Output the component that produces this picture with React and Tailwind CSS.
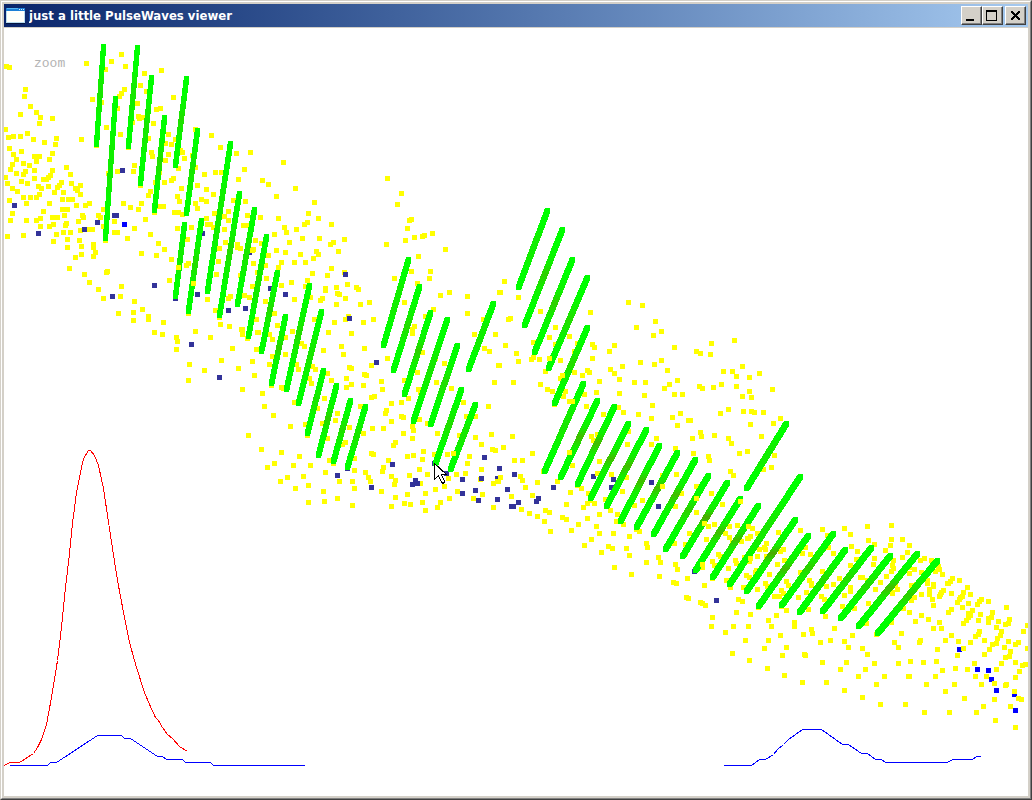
import React from "react";

const YELLOW = `
6,66 9,67 25,89 24,96 30,106 20,114 36,112 40,117 52,118 39,123 5,129 27,133 8,137 13,136 20,136 33,139 44,142 56,138 55,144 9,148 21,151 13,154 52,153 34,156 39,156 16,159 49,159 36,161 12,164 23,163 29,165 10,169 25,171 34,170 52,170 66,167 16,173 23,174 5,177 50,175 48,177 70,174 34,178 43,179 46,179 21,181 7,183 27,183 61,182 38,186 48,186 57,187 59,185 71,183 80,185 12,188 41,188 75,188 77,190 17,191 54,192 63,192 39,194 80,194 23,197 30,197 36,197 9,200 62,199 68,199 72,199
86,63 111,61 121,54 105,69 125,66 144,73 161,70 140,85 146,91 124,89 121,93 119,96 92,99 101,102 173,97 137,103 117,108 156,109 160,108 138,116 143,117 139,118 153,123 106,127 132,122 120,134 195,129 168,134 148,138 81,139 211,135 171,144 175,139 165,143 220,147 236,153 250,152 151,152 152,156 168,154 180,150 182,152 192,155 184,158 165,160 134,165 133,171 117,171 108,173 195,167 178,168 159,172 204,174 215,172 221,172 244,169 238,179 173,178 171,180 164,182 155,182 197,185 181,188 206,189 150,191 148,195 213,194 177,196 201,199 206,201 96,145 128,147 140,185
26,203 49,203 76,205 85,205 89,203 62,209 67,209 43,211 12,213 10,220 26,220 36,220 40,218 52,217 57,217 64,215 82,215 83,217 78,221 98,215 100,217 103,209 40,226 49,226 53,224 66,223 65,225 56,234 63,232 70,232 7,236 23,235 80,230 88,229 92,229 103,226 53,241 67,239 79,240 67,247 81,246 93,244 93,247 95,252 93,256 81,254 75,257 69,268 84,274 106,272 107,271 89,282 98,289 103,298 121,286 120,296 134,301 118,313 133,312 133,320 142,309 148,316 148,319 163,322 154,332 162,334 176,337 177,341 176,349 189,364 204,370 188,380 195,331 210,337 232,348 221,360 238,368 252,361 254,375 256,349 257,332 220,324 229,326 241,329 242,334
123,203 130,207 141,203 138,209 114,221 114,232 117,232 134,228 145,219 127,238 150,234 158,243 164,249 141,253 156,255 171,259 169,280 159,206 163,206 179,201 174,212 178,212 182,214 177,228 195,203 197,208 206,218 187,239 191,227 186,265 188,263 207,224 210,224 213,227 214,213 224,216 228,211 228,220 224,229 233,200 245,201 243,225 246,225 255,240 225,242 237,244 237,247 240,248 219,248 218,261 216,274 207,299 215,310 228,298 230,296 240,275 244,295 249,297 252,286 256,319 247,338 252,250 253,263 257,272 105,240 154,212 219,317 188,313
283,162 262,180 268,184 276,196 295,188 247,215 260,217 278,218 314,202 308,213 307,222 304,224 318,218 331,224 284,227 286,232 296,229 274,234 261,243 289,242 302,238 319,238 344,239 333,242 330,244 338,251 316,251 318,254 313,258 276,250 268,255 285,252 300,254 294,262 305,262 281,262 278,267 265,265 253,249 266,278 281,285 291,282 312,273 331,268 327,275 307,280 305,286 344,272 347,284 356,287 358,289 336,287 337,293 339,294 325,288 325,290 345,298 336,304 322,298 320,300 310,297 360,304 369,302 294,299 274,313 265,301 252,286 314,319 348,316 345,319 373,319
387,178 401,193 397,204 411,219 409,220 407,228 414,237 422,236 424,235 432,233 405,240 386,244 445,249 418,256 411,271 430,271 429,278 394,278 417,283 404,302 440,295 449,292 467,296 467,313 433,309 425,316 483,319 499,292
242,329 242,334 277,325 269,334 272,339 258,332 242,389 262,393 264,406 273,415 290,426 248,435 261,449 281,452 274,463 267,467 280,481 287,477 299,456 293,465 310,465 303,476 295,488 308,485 325,472 323,491 308,502 324,501 337,498 352,505 339,481 352,481 354,488 354,470 365,472 368,477 370,481 381,491 272,356 269,364 292,331 285,337 285,354 304,346 301,343 296,364 298,369 294,402 305,424 281,387 283,388 328,332 334,322 323,350 341,346 343,354 351,333 364,348 363,322 349,367 351,368 312,366 315,369 309,378 311,383 327,373 331,380 346,378 351,384 346,387 337,413 335,420 324,398 317,408 322,423 327,438 349,427 360,406 363,433 372,428 383,428 371,365 363,385 364,374 366,375 381,381 382,389 374,396 371,397 386,410 385,413 391,403 401,402 408,398 401,416 403,417 391,421 403,433 412,438 395,442 393,445 412,426 413,430 437,433 345,442 342,444 354,458 329,460 371,453 373,454 388,460 383,467 382,471 391,476 395,480 394,484 407,456 413,455 422,459 423,451 434,454 409,475 419,469 427,474 420,483 407,494 395,497 404,503 410,504 391,506 422,502 425,510 437,507 440,502 425,493 435,489 444,486 448,478 449,498 457,491 456,474 465,473 467,463 469,456 447,454 459,435 475,437 481,444 491,434 492,449 495,450 488,406 494,382 475,416 466,416 463,402 451,388 436,382 444,363 435,358 418,389 420,392 417,372 422,352 414,326 412,333 412,329 387,358 404,380 474,334 484,348 489,351 495,334 482,494 473,498 493,483 497,481 493,507 480,479 427,423 419,419 498,365 271,385 307,435 333,463
504,281 500,292 518,297 540,311 510,318 508,319 505,345 516,353 518,361 499,365 513,382 531,359 539,359 533,342 533,357 540,384 555,327 549,337 569,336 590,312 555,344 560,360 545,371 560,378 574,372 582,375 587,370 589,372 592,344 594,347 592,358 599,381 610,369 614,373 619,379 622,366 609,351 614,345 628,302 642,305 636,327 655,321 661,331 653,335 674,347 640,362 654,364 661,360 667,370 634,382 645,382 669,384 677,380 664,388 696,351 700,353 711,343 710,354 734,340 742,366 732,371 723,371 736,376 749,377 759,373 721,384 736,386 713,387 699,386 702,388 547,389 574,351 577,343 772,389
552,391 565,391 563,396 584,394 596,392 586,406 603,414 623,412 619,393 618,407 638,414 644,395 652,405 651,418 674,394 682,394 680,413 672,417 677,425 688,420 690,420 720,413 728,409 742,396 749,391 751,397 743,411 751,411 754,412 750,424 700,432 701,436 692,438 714,435 728,438 731,443 747,451 739,453 693,453 708,456 709,460 730,471 733,475 696,486 711,493 696,512 722,504 656,438 651,444 627,444 628,431 675,448 591,436 597,434 593,440 572,465 599,461 597,473 611,474 626,477 662,475 676,474 622,491 642,500 634,505 594,503 587,503 588,493 581,488 583,507 570,492 566,504 587,518 599,514 610,510 617,514 623,524 629,536 639,531 613,533 599,533 596,526 578,524 571,530 591,539 584,545 601,552 608,546 612,548 626,548 629,555 614,567 631,574 646,543 647,547 646,562 658,557 660,562 659,576 675,564 677,569 673,582 676,583 687,578 704,585 686,597 562,517 566,519 557,481 537,482 525,487 532,495 545,510 549,512 544,521 550,531 537,516 529,513 521,509 511,496 520,476 522,480 500,477 498,481 514,460 522,460 532,453 512,436 503,447 491,434 481,469 605,499 675,506 681,493 689,533 674,543 685,544 685,553 706,539 708,526 714,524 729,526 724,524 737,525 752,528 725,533 729,537 732,542 741,541 748,538 750,536 718,554 720,556 730,550 732,547 712,561 714,565 728,568 735,560 736,563 726,580 746,575 755,572 743,587 757,589 749,577 554,404 543,471 577,485 590,500 616,521 636,529 712,578 730,587
763,412 780,418 773,423 761,436 774,455 771,467 763,469 844,528 867,526 891,525 891,539 902,539 850,534 868,540 874,544 890,545 909,545 885,550 907,552 902,557 874,558 873,564 893,560 892,565 857,551 851,546 856,559 850,565 833,553 822,529 827,535 828,547 800,530 778,532 757,533 748,526 747,538 741,541 766,543 764,547 759,549 765,549 783,549 780,551 766,556 757,556 744,557 749,561 777,564 784,560 769,574 756,570 765,583 767,586 786,581 788,585 781,590 783,593 774,596 779,596 805,547 810,554 802,553 800,572 809,580 811,585 806,592 798,597 826,586 822,571 821,596 833,584 839,578 844,595 850,588 850,591 862,577 867,580 880,582 886,576 891,571 909,573 914,569 909,567 920,560 924,558 931,560 921,572 927,580 927,583 929,591 933,586 935,571 938,566 942,574 939,569 950,581 952,578 948,583 959,580 967,587 970,594 963,592 960,597 951,593 943,590 940,594 939,596 981,599 911,585 915,588 916,584 897,589 892,592 911,597
702,564 702,567 688,598 700,602 702,603 705,605 712,617 711,626 725,632 733,626 736,612 738,599 742,601 750,614 748,626 745,640 732,653 749,660 767,668 764,648 768,640 771,626 768,620 776,615 786,610 780,635 786,647 782,655 784,675 802,682 826,682 804,654 805,655 803,634 811,629 812,633 794,622 794,626 820,642 830,640 834,628 822,662 846,662 840,669 844,690 862,697 880,704 905,704 924,712 949,712 976,712 995,720 1015,727 858,676 865,669 874,663 867,654 862,648 848,647 844,641 852,635 876,684 884,676 898,663 910,661 898,647 894,642 901,633 891,622 908,676 909,676 923,662 936,661 937,649 919,642 920,640 926,684 935,676 942,670 945,691 954,684 964,698 955,668 967,669 974,663 975,676 981,684 986,676 994,683 994,699 983,706 1010,706 1014,691 1018,698 1021,699 1006,684 1005,685 1015,677 1019,671 1022,665 1025,664 1015,662 996,669 1001,663 1005,657 1009,656 1010,651 1004,647 1015,644 1018,642 1008,641 1027,648 1023,631 1027,625 984,654 989,649 992,644 996,643 997,638 1000,635 1001,631 996,627 998,621 1005,624 1009,619 1008,623 1006,607 992,612 988,618 988,622 991,617 988,601 979,601 977,604 980,614 978,620 972,610 968,613 970,615 968,617 966,620 963,623 962,607 957,602 959,599 962,596 968,603 979,631 978,634 975,636 970,642 984,640 958,641 963,648 957,655 945,640 951,635 941,628 933,628 939,622 928,619 921,615 915,621 909,612 903,608 911,600 921,594 929,594 939,596 941,592 932,599 933,605 951,609 948,612 933,584 929,589 947,583 866,623 868,603 842,606 854,608 825,616 808,609 824,599 850,587 875,589 860,577 873,564 893,568 811,583 895,584 897,589 892,593 914,597 758,607 781,606 876,634 840,618
`;

/* Returns that lie in front of the pulse segments. */
const FRONT = `178,267 193,283 453,453 549,358 562,375 569,401 572,401 569,452 662,486 696,498 740,501 704,523 748,526 702,564 750,558`;

/* Navy returns that the yellow ones overlap in part. */
const NAVY = `249,252 497,478 593,476 202,233 175,298 285,294 270,288 434,463 347,468 694,571 499,468`;

/* Navy returns that stay in full view. */
const NAVY_FRONT = `122,170 14,205 38,233 84,229 97,222 114,215 116,215 154,285 112,296 197,294 228,310 245,308 191,344 219,377 345,274 349,318 376,362 337,475 392,464 371,487 415,480 412,484 417,483 446,473 462,479 481,478 484,457 462,493 475,490 478,500 497,499 514,474 507,489 553,487 538,498 536,501 518,502 511,506 513,506 613,479 611,487 651,482 658,506 716,600`;

const BLUE = `124,224 959,649 977,669 988,670 991,679 996,690 1014,694 1015,710`;

/* Pulse segments: top x, top y, bottom x, bottom y, strength class (0-5). */
const PULSES = [
  [103, 46, 96, 144, 1], [115, 98, 105, 238, 0], [137, 47, 128, 146, 1], [151, 77, 140, 183, 1],
  [164, 117, 154, 210, 2], [186, 78, 175, 165, 2], [197, 130, 186, 213, 1], [230, 143, 207, 291, 0],
  [239, 193, 219, 315, 2], [254, 209, 237, 304, 1], [184, 224, 175, 296, 0], [201, 220, 188, 311, 2],
  [266, 236, 248, 336, 1], [277, 272, 261, 351, 2], [285, 316, 271, 383, 3], [309, 285, 286, 389, 2],
  [321, 311, 298, 403, 1], [323, 370, 307, 433, 1], [336, 385, 318, 455, 3], [350, 400, 333, 461, 2],
  [365, 406, 347, 467, 1], [408, 259, 383, 345, 0], [419, 286, 393, 370, 2], [430, 312, 404, 394, 3],
  [447, 319, 413, 421, 1], [457, 345, 430, 424, 2], [461, 389, 435, 463, 2], [475, 404, 450, 469, 1],
  [493, 303, 468, 369, 0], [547, 210, 518, 287, 0], [562, 229, 524, 325, 3], [572, 259, 534, 352, 3],
  [587, 277, 548, 368, 2], [587, 327, 554, 403, 2], [583, 383, 544, 471, 1], [597, 400, 560, 477, 4],
  [614, 406, 577, 484, 4], [628, 423, 590, 498, 4], [646, 429, 606, 506, 4], [659, 445, 620, 521, 4],
  [677, 452, 636, 527, 4], [695, 459, 653, 534, 4], [708, 475, 665, 549, 3], [727, 482, 682, 556, 5],
  [740, 498, 695, 570, 4], [758, 505, 712, 577, 4], [786, 423, 746, 488, 0], [800, 476, 729, 584, 1],
  [795, 519, 746, 591, 5], [808, 535, 758, 606, 4], [833, 533, 781, 605, 3], [845, 549, 799, 612, 2],
  [871, 547, 822, 611, 2], [890, 555, 840, 618, 2], [917, 553, 858, 626, 4], [937, 560, 877, 633, 3],
];

const PEAKS = ["#0fef00", "#18e600", "#24dc00", "#2ecf00", "#42bc00", "#4ca800"];

const OUTGOING =
  "4,765 9,762 19,762 33,753 37,747 41,739 46,724 51,697 57,660 61,627 65,587 69,553 72,523 76,492 80,472 83,458 88,450 90,450 94,455 98,465 103,488 107,515 112,548 117,580 123,612 129,642 136,667 144,692 149,704 155,717 158,720 162,727 167,734 172,738 179,746 187,751";
const RETURN_A =
  "9,765 47,765 50,762 56,762 97,735 121,735 124,738 130,738 157,756 162,756 166,759 182,759 185,762 210,762 213,765 304,765";
const RETURN_B =
  "723,765 751,765 759,759 765,759 773,754 777,749 783,744 788,739 802,729 821,729 842,744 848,744 861,753 867,753 875,759 881,759 885,762 947,762 952,759 972,759 976,756 980,756";

function dots(list) {
  return list
    .trim()
    .split(/\s+/)
    .map((pair) => {
      const [x, y] = pair.split(",").map(Number);
      return `M${x - 2} ${y - 2}h5v5h-5z`;
    })
    .join("");
}

function sweep([x1, y1, x2, y2]) {
  return `M${x1 - 2} ${y1 - 2}H${x1 + 3}V${y1 + 3}L${x2 + 3} ${y2 + 3}H${x2 - 2}V${y2 - 2}Z`;
}

function Scene() {
  return (
    <svg
      className="block h-full w-full"
      viewBox="4 28 1024 768"
      preserveAspectRatio="xMinYMin meet"
      shapeRendering="crispEdges"
      role="img"
      aria-label="Pulse point cloud"
    >
      <defs>
        {PEAKS.map((color, i) => (
          <linearGradient key={color} id={`pulse${i}`} x1="0" y1="0" x2="0" y2="1">
            <stop offset="0.2" stopColor="#00ff00" />
            <stop offset="0.36" stopColor="#12ee00" />
            <stop offset="0.47" stopColor={color} />
            <stop offset="0.6" stopColor="#12ee00" />
            <stop offset="0.76" stopColor="#00ff00" />
          </linearGradient>
        ))}
      </defs>
      <path d={dots(NAVY)} fill="#333399" />
      <path d={dots(BLUE)} fill="#0000ff" />
      <path d={dots(YELLOW)} fill="#ffff00" />
      <path d={dots(NAVY_FRONT)} fill="#333399" />
      {PULSES.map((p) => (
        <path key={p.join("-")} d={sweep(p)} fill={`url(#pulse${p[4]})`} />
      ))}
      <path d={dots(FRONT)} fill="#ffff00" />
      <g fill="none" strokeWidth="1" transform="translate(0.5 0.5)">
        <polyline points={OUTGOING} stroke="#ff0000" />
        <polyline points={RETURN_A} stroke="#0000ff" />
        <polyline points={RETURN_B} stroke="#0000ff" />
      </g>
      <path
        d="M434.500 463.500V479.500L438.500 475.500L441.500 482.500L443.500 483.500L444.500 481.500L441.500 474.500H446.500Z"
        fill="#ffffff"
        stroke="#000000"
      />
    </svg>
  );
}

function CaptionButton({ label, children }) {
  return (
    <button
      type="button"
      aria-label={label}
      className="h-[19px] w-[21px] border border-t-white border-l-white border-r-[#404040] border-b-[#404040] bg-[#d4d0c8] shadow-[inset_-1px_-1px_0_#808080]"
    >
      <svg className="block h-[17px] w-[19px]" viewBox="0 0 19 17" shapeRendering="crispEdges">
        {children}
      </svg>
    </button>
  );
}

function TitleBar() {
  return (
    <header className="flex h-[23px] shrink-0 items-center bg-linear-to-r from-[#0a246a] to-[#a6caf0] px-0.5">
      <svg className="h-4 w-[19px] shrink-0" viewBox="0 0 19 16" shapeRendering="crispEdges" aria-hidden="true">
        <path d="M0 0H19V16H0Z" fill="#06153f" />
        <path d="M0 0H19V15H0Z" fill="#b9dcf0" />
        <path d="M0 0H19V3H0Z" fill="#1c7fd6" />
        <path d="M1 0H12V1H1Z" fill="#55b4f2" />
        <path d="M13 1h1v1h-1zM15 1h1v1h-1zM17 1h1v1h-1z" fill="#d8efff" />
        <path d="M1 3H18V14H1Z" fill="#fffffa" />
      </svg>
      <h1 className="ml-1 flex-1 truncate font-['DejaVu_Sans_Condensed','DejaVu_Sans',sans-serif] text-[13px] leading-5 font-bold text-white">
        just a little PulseWaves viewer
      </h1>
      <div className="flex">
        <CaptionButton label="Minimize">
          <path d="M4 12h8v2h-8z" />
        </CaptionButton>
        <CaptionButton label="Maximize">
          <path d="M3 3h11v11h-11zM4 5v8h9v-8z" fillRule="evenodd" />
        </CaptionButton>
      </div>
      <div className="ml-0.5 flex">
        <CaptionButton label="Close">
          <path d="M5 4h2v1h-2zM12 4h2v1h-2zM5 5h3v1h-3zM11 5h3v1h-3zM6 6h3v1h-3zM10 6h3v1h-3zM7 7h5v1h-5zM8 8h3v1h-3zM7 9h5v1h-5zM6 10h3v1h-3zM10 10h3v1h-3zM5 11h3v1h-3zM11 11h3v1h-3zM5 12h2v1h-2zM12 12h2v1h-2z" />
        </CaptionButton>
      </div>
    </header>
  );
}

export default function App() {
  return (
    <div className="h-screen w-full border border-t-[#d4d0c8] border-r-[#404040] border-b-[#404040] border-l-[#d4d0c8] bg-[#d4d0c8]">
      <div className="flex h-full flex-col border border-t-white border-r-[#808080] border-b-[#808080] border-l-white p-0.5">
        <TitleBar />
        <main className="relative mt-px min-h-0 flex-1 bg-white">
          <Scene />
          <span className="absolute top-[26px] left-[30px] font-['Liberation_Mono',monospace] text-[13px] leading-5 text-[#b3b3b3]">
            zoom
          </span>
        </main>
      </div>
    </div>
  );
}
